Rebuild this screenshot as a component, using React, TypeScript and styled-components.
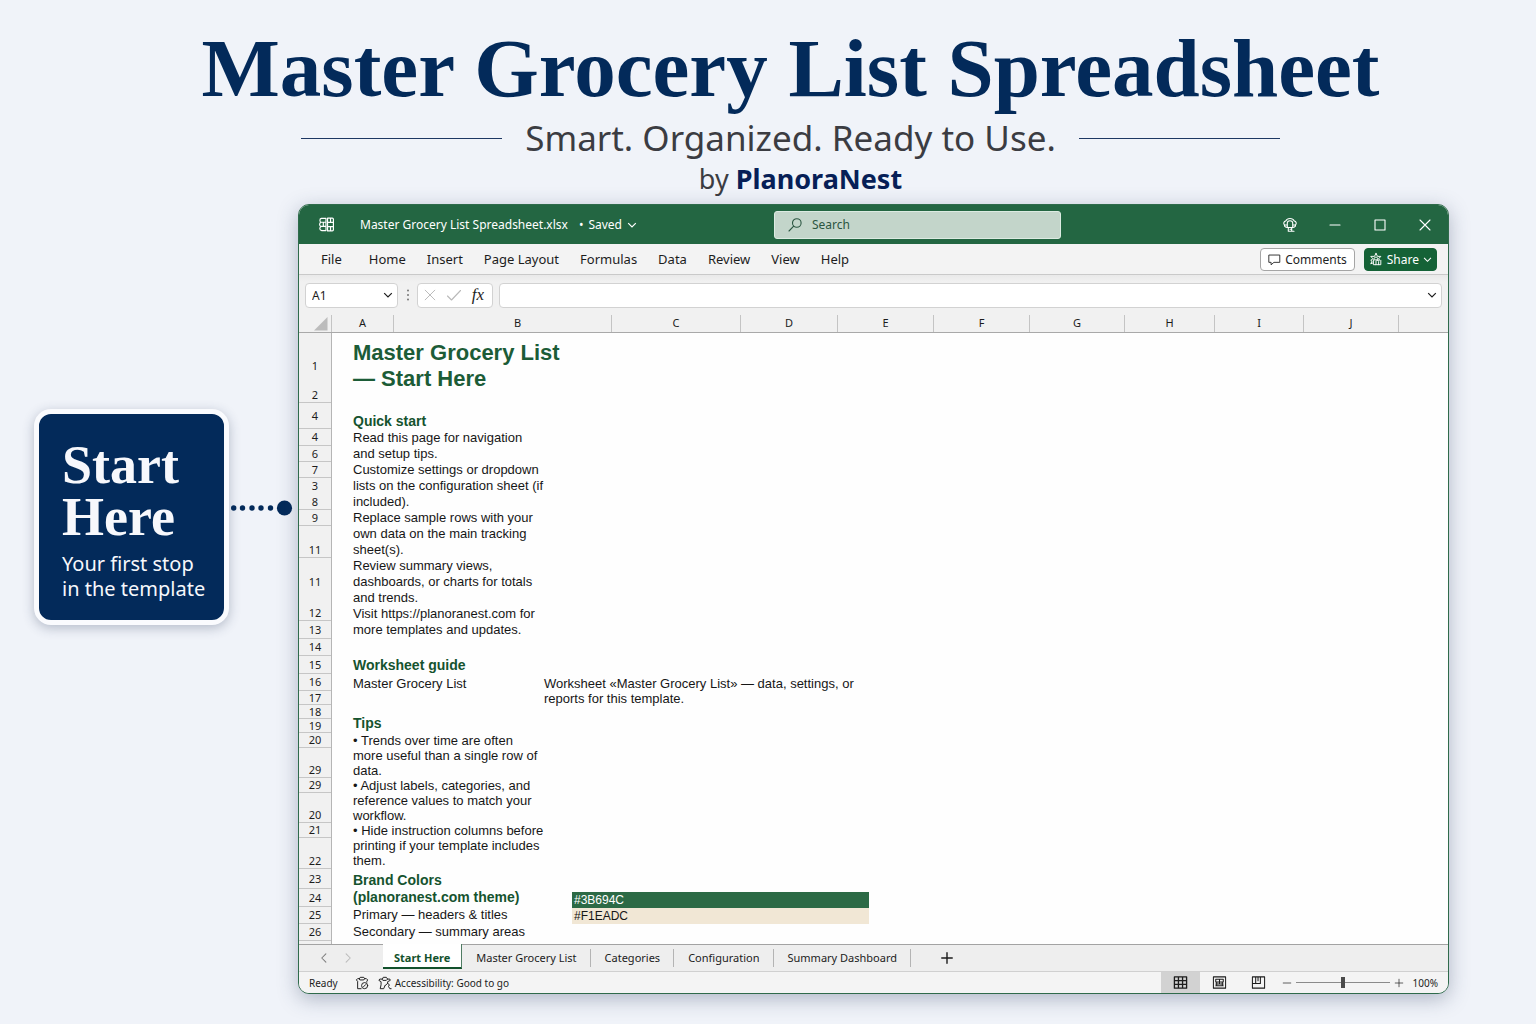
import React from "react";
import styled, { createGlobalStyle, css } from "styled-components";

const color = {
  page: "#f0f3f9",
  navy: "#032a5a",
  ink: "#3b3c42",
  green: "#236642",
  greenDark: "#12512c",
  chrome: "#f1f1f1",
  line: "#c9c9c9",
};

const sans = `"Noto Sans", "Open Sans", sans-serif`;
const serif = `"Liberation Serif", "Times New Roman", serif`;
const arial = `"Liberation Sans", Arial, sans-serif`;

const GlobalStyle = createGlobalStyle`
  *, *::before, *::after { box-sizing: border-box; }
  body { margin: 0; background: ${color.page}; font-family: ${sans}; color: #1c1c1c; }
  h1, h2, h3, p, ol, ul { margin: 0; padding: 0; }
  ol, ul { list-style: none; }
  button, input { font: inherit; color: inherit; }
  button { border: 0; background: none; padding: 0; cursor: pointer; }
`;

const Page = styled.div`
  min-height: 100vh;
  padding: 20px 87px 30px 34px;
`;

const Hero = styled.header`
  display: flex;
  flex-direction: column;
  align-items: center;
  padding-left: 98px;
  white-space: nowrap;
`;

const HeroTitle = styled.h1`
  font: bold 83px/96px ${serif};
  color: ${color.navy};
`;

const Tagline = styled.div`
  display: flex;
  align-items: center;
  gap: 23px;
`;

const Rule = styled.span`
  width: 201px;
  height: 1px;
  background: #1d3763;
`;

const TaglineText = styled.p`
  font-size: 35px;
  line-height: 44px;
  color: ${color.ink};
`;

const Byline = styled.p`
  padding-left: 20px;
  font-size: 27px;
  line-height: 38px;
  color: ${color.ink};
  strong { font-weight: 700; color: #071f57; }
`;

const Stage = styled.main`
  display: flex;
  align-items: flex-start;
  padding-top: 6px;
`;

const CalloutRow = styled.aside`
  flex: none;
  display: flex;
  align-items: center;
  gap: 2px;
  width: 264px;
  margin-top: 205px;
  > svg { margin-bottom: 18px; }
`;

const Callout = styled.section`
  width: 195px;
  padding: 25px 0 19px 23px;
  border: 5px solid #fafbfe;
  border-radius: 17px;
  background: ${color.navy};
  color: #f7f8fc;
  white-space: nowrap;
  box-shadow: 0 3px 12px rgba(40, 55, 90, 0.3);
`;

const CalloutTitle = styled.h2`
  font: bold 54px/52px ${serif};
  span { display: block; }
`;

const CalloutText = styled.p`
  padding-top: 8px;
  font-size: 20px;
  line-height: 25px;
`;

const Window = styled.article`
  flex: 1;
  min-width: 0;
  overflow: hidden;
  border: 1px solid #2f6b4b;
  border-radius: 11px;
  background: #fff;
  box-shadow: 0 5px 20px rgba(50, 65, 100, 0.34);
`;

const TitleBar = styled.header`
  display: grid;
  grid-template-columns: 475fr 287px 387fr;
  align-items: center;
  height: 39px;
  background: ${color.green};
  color: #fff;
  font-size: 12px;
`;

const FileInfo = styled.div`
  display: flex;
  align-items: center;
  padding-left: 19px;
  white-space: nowrap;
  > svg { margin-right: 25px; }
`;

const SavedButton = styled.button`
  display: flex;
  align-items: center;
  gap: 5px;
  margin-left: 11px;
`;

const SearchBox = styled.label`
  display: flex;
  align-items: center;
  gap: 9px;
  height: 28px;
  padding: 0 12px;
  border: 1px solid #dcebe2;
  border-radius: 3px;
  background: #c3d5ca;
  color: #2b5641;
`;

const PlainInput = styled.input`
  flex: 1;
  min-width: 0;
  padding: 0;
  border: 0;
  outline: 0;
  background: transparent;
  &::placeholder { color: #2b5641; opacity: 1; }
`;

const WindowControls = styled.div`
  display: flex;
  justify-content: flex-end;
  gap: 29px;
  padding-right: 15px;
  button { display: flex; }
`;

const MenuBar = styled.nav`
  display: flex;
  align-items: center;
  height: 31px;
  padding: 0 11px;
  border-bottom: 1px solid ${color.line};
  background: #f3f3f3;
  font-size: 13px;
`;

const MenuItem = styled.button<{ $wide?: boolean }>`
  padding: 0 ${(p) => (p.$wide ? 16 : 10)}px 0 11px;
  line-height: 20px;
  white-space: nowrap;
`;

const MenuActions = styled.div`
  display: flex;
  gap: 9px;
  margin-left: auto;
  font-size: 12px;
`;

const ActionButton = styled.button<{ $primary?: boolean }>`
  display: flex;
  align-items: center;
  justify-content: center;
  gap: 4px;
  height: 23px;
  padding: 0 ${(p) => (p.$primary ? 4 : 7)}px;
  border: 1px solid ${(p) => (p.$primary ? "#156237" : "#a5a5a5")};
  border-radius: 4px;
  background: ${(p) => (p.$primary ? "#156237" : "#fff")};
  color: ${(p) => (p.$primary ? "#fff" : "#222")};
  white-space: nowrap;
`;

const FormulaBar = styled.div`
  display: flex;
  align-items: center;
  height: 40px;
  padding: 0 6px;
  background: linear-gradient(#e9e9e9, ${color.chrome} 7px);
`;

const field = css`
  display: flex;
  align-items: center;
  height: 25px;
  border: 1px solid #d2d2d2;
  border-radius: 4px;
  background: #fff;
`;

const NameBox = styled.label`
  ${field}
  width: 93px;
  padding: 0 4px 0 6px;
  font-size: 12px;
`;

const Grip = styled.span`
  width: 19px;
  display: flex;
  justify-content: center;
`;

const FormulaTools = styled.div`
  ${field}
  width: 76px;
  justify-content: space-between;
  margin-right: 6px;
  padding: 0 8px 0 5px;
  button { display: flex; }
`;

const FxButton = styled.button`
  font: italic 17px/20px ${serif};
  color: #1e1e1e;
`;

const FormulaField = styled.label`
  ${field}
  flex: 1;
  padding: 0 4px 0 8px;
`;

const ColumnHeads = styled.div`
  display: grid;
  grid-template-columns: 33px 62px 218px 129px 97px 96px 96px 95px 90px 89px 95px 1fr;
  height: 18px;
  border-bottom: 1px solid #a9a9a9;
  background: ${color.chrome};
  font-size: 11px;
  line-height: 16px;
  text-align: center;
`;

const ColumnHead = styled.span<{ $shift?: boolean }>`
  padding-left: ${(p) => (p.$shift ? 30 : 0)}px;
  border-right: 1px solid #c4c4c4;
  &:last-child { border-right: 0; }
`;

const SelectAll = styled.button`
  display: flex;
  justify-content: flex-end;
  align-items: center;
  padding-right: 3px;
  border-right: 1px solid #c4c4c4;
`;

const Sheet = styled.div`
  display: flex;
  background: #fefefe;
`;

const Rail = styled.ol`
  width: 33px;
  flex: none;
  padding-bottom: 3px;
  border-right: 1px solid #b5b5b5;
  background: ${color.chrome};
  font-size: 11px;
  text-align: center;
`;

const RailCell = styled.li<{ $h: number; $end?: boolean; $open?: boolean }>`
  display: flex;
  justify-content: center;
  align-items: ${(p) => (p.$end ? "flex-end" : "center")};
  height: ${(p) => p.$h}px;
  line-height: 14px;
  border-bottom: ${(p) => (p.$open ? 0 : 1)}px solid #c6c6c6;
`;

const Guide = styled.table`
  table-layout: fixed;
  width: 100%;
  height: max-content;
  border-collapse: collapse;
  font: 13px/16px ${arial};
  color: #161616;
  white-space: pre;
`;

const Cell = styled.td<{ $top?: number; $line?: number; $indent?: boolean }>`
  padding: ${(p) => p.$top ?? 0}px 0 0 ${(p) => (p.$indent ? 21 : 0)}px;
  line-height: ${(p) => p.$line ?? 16}px;
  text-align: left;
  vertical-align: top;
`;

const SheetTitle = styled.h2`
  font: bold 22px/26px ${arial};
  color: #1c5c37;
`;

const SheetHeading = styled.h3<{ $line?: number }>`
  font: bold 14px/${(p) => p.$line ?? 18}px ${arial};
  color: #15532e;
`;

const Swatch = styled.div<{ $bg: string; $fg: string }>`
  height: 16px;
  padding-left: 2px;
  background: ${(p) => p.$bg};
  color: ${(p) => p.$fg};
  font-size: 12px;
  line-height: 17px;
`;

const TabBar = styled.nav`
  display: flex;
  align-items: stretch;
  height: 28px;
  border-top: 1px solid #a3a3a3;
  border-bottom: 1px solid #d0d0d0;
  background: #eeeeee;
  font-size: 11px;
`;

const TabArrows = styled.div`
  display: flex;
  align-items: center;
  justify-content: center;
  gap: 12px;
  width: 84px;
  padding-right: 10px;
  button { display: flex; }
`;

const Tab = styled.button<{ $active?: boolean }>`
  position: relative;
  padding: 0 14px;
  line-height: 26px;
  white-space: nowrap;
  &::after {
    content: "";
    position: absolute;
    top: 4px;
    right: 0;
    width: 1px;
    height: 18px;
    background: #b4b4b4;
  }
  ${(p) =>
    p.$active &&
    css`
      margin: -1px 0 2px;
      padding: 2px 11px 0;
      border-right: 1px solid #4f7c63;
      border-bottom: 2px solid #12512c;
      background: #fff;
      color: #12512c;
      font-weight: 700;
      line-height: 24px;
      &::after { display: none; }
    `}
`;

const AddTab = styled.button`
  display: flex;
  align-items: center;
  margin-left: 29px;
`;

const StatusBar = styled.footer`
  display: flex;
  align-items: center;
  height: 21px;
  padding: 0 10px;
  background: #f4f4f4;
  font-size: 10px;
  white-space: nowrap;
`;

const StatusItem = styled.span`
  display: flex;
  align-items: center;
  gap: 3px;
  margin-right: 9px;
  &:first-child { margin-right: 17px; }
`;

const ViewButtons = styled.div`
  display: flex;
  align-self: stretch;
  margin-left: auto;
`;

const ViewButton = styled.button<{ $active?: boolean }>`
  display: flex;
  align-items: center;
  justify-content: center;
  width: 39px;
  background: ${(p) => (p.$active ? "#d2d2d2" : "transparent")};
`;

const Zoom = styled.div`
  display: flex;
  align-items: center;
  gap: 4px;
  margin-left: 4px;
  button { display: flex; }
  output { margin-left: 5px; }
`;

const ZoomSlider = styled.input`
  appearance: none;
  width: 94px;
  height: 12px;
  margin: 0;
  background: linear-gradient(#8b8b8b, #8b8b8b) center / 100% 1px no-repeat;
  &::-webkit-slider-thumb {
    appearance: none;
    width: 4px;
    height: 11px;
    background: #4a4a4a;
  }
`;

type IconProps = { size?: number; children: React.ReactNode; stroke?: number };

const Icon = ({ size = 16, stroke = 1.1, children }: IconProps) => (
  <svg
    width={size}
    height={size}
    viewBox="0 0 16 16"
    fill="none"
    stroke="currentColor"
    strokeWidth={stroke}
    strokeLinecap="round"
    strokeLinejoin="round"
    aria-hidden="true"
  >
    {children}
  </svg>
);

const Chevron = ({ size = 10 }: { size?: number }) => (
  <svg width={size} height={size} viewBox="0 0 10 10" fill="none" stroke="currentColor" strokeWidth="1.2" aria-hidden="true">
    <path d="M1.2 3.2 5 7l3.800-3.800" />
  </svg>
);

const Connector = () => (
  <svg width="64" height="16" viewBox="0 0 64 16" fill={color.navy} aria-hidden="true">
    {[2.7, 11.5, 21, 30, 39.5].map((x) => (
      <circle key={x} cx={x} cy="8" r="2.700" />
    ))}
    <circle cx="53.500" cy="8" r="7.600" />
  </svg>
);

const menus = ["File", "Home", "Insert", "Page Layout", "Formulas", "Data", "Review", "View", "Help"];
const tabs = ["Start Here", "Master Grocery List", "Categories", "Configuration", "Summary Dashboard"];
const columns = ["A", "B", "C", "D", "E", "F", "G", "H", "I", "J", ""];

type RailRow = { n: string; h: number; end?: boolean; open?: boolean };
const rail: RailRow[] = [
  { n: "1", h: 40, end: true, open: true },
  { n: "2", h: 30, end: true },
  { n: "4", h: 26 },
  { n: "4", h: 17 },
  { n: "6", h: 16 },
  { n: "7", h: 16 },
  { n: "3", h: 16, open: true },
  { n: "8", h: 16 },
  { n: "9", h: 16 },
  { n: "11", h: 32, end: true },
  { n: "11", h: 47, open: true },
  { n: "12", h: 16 },
  { n: "13", h: 18 },
  { n: "14", h: 17 },
  { n: "15", h: 18 },
  { n: "16", h: 17 },
  { n: "17", h: 14 },
  { n: "18", h: 14 },
  { n: "19", h: 14 },
  { n: "20", h: 15 },
  { n: "29", h: 30, end: true },
  { n: "29", h: 15 },
  { n: "20", h: 30, end: true },
  { n: "21", h: 15 },
  { n: "22", h: 31, end: true },
  { n: "23", h: 20 },
  { n: "24", h: 18 },
  { n: "25", h: 17 },
  { n: "26", h: 17 },
];

const steps = [
  "Read this page for navigation\nand setup tips.",
  "Customize settings or dropdown\nlists on the configuration sheet (if\nincluded).",
  "Replace sample rows with your\nown data on the main tracking\nsheet(s).",
  "Review summary views,\ndashboards, or charts for totals\nand trends.",
  "Visit https://planoranest.com for\nmore templates and updates.",
];

const tips = [
  "• Trends over time are often\nmore useful than a single row of\ndata.",
  "• Adjust labels, categories, and\nreference values to match your\nworkflow.",
  "• Hide instruction columns before\nprinting if your template includes\nthem.",
];

const GuideTable = () => (
  <Guide>
    <colgroup>
      <col style={{ width: 212 }} />
      <col style={{ width: 28 }} />
      <col style={{ width: 297 }} />
      <col />
    </colgroup>
    <tbody>
      <tr>
        <Cell $indent $top={7} colSpan={4}>
          <SheetTitle>{"Master Grocery List\n— Start Here"}</SheetTitle>
        </Cell>
      </tr>
      <tr>
        <Cell $indent $top={20} colSpan={4}>
          <SheetHeading>Quick start</SheetHeading>
        </Cell>
      </tr>
      {steps.map((text) => (
        <tr key={text}>
          <Cell $indent colSpan={4}>{text}</Cell>
        </tr>
      ))}
      <tr>
        <Cell $indent $top={18} colSpan={4}>
          <SheetHeading>Worksheet guide</SheetHeading>
        </Cell>
      </tr>
      <tr>
        <Cell $indent $top={2} $line={15}>Master Grocery List</Cell>
        <Cell $top={2} $line={15} colSpan={3}>
          {"Worksheet «Master Grocery List» — data, settings, or\nreports for this template."}
        </Cell>
      </tr>
      <tr>
        <Cell $indent $top={8} colSpan={4}>
          <SheetHeading $line={19}>Tips</SheetHeading>
        </Cell>
      </tr>
      {tips.map((text) => (
        <tr key={text}>
          <Cell $indent $line={15} colSpan={4}>{text}</Cell>
        </tr>
      ))}
      <tr>
        <Cell $indent $top={4} $line={17} colSpan={2}>
          <SheetHeading $line={17}>{"Brand Colors\n(planoranest.com theme)"}</SheetHeading>
          {"Primary — headers & titles\nSecondary — summary areas"}
        </Cell>
        <Cell $top={24}>
          <Swatch $bg="#2c6a45" $fg="#fff">#3B694C</Swatch>
          <Swatch $bg="#f1e7d5" $fg="#161616">#F1EADC</Swatch>
        </Cell>
        <Cell />
      </tr>
    </tbody>
  </Guide>
);

export default function App() {
  return (
    <>
      <GlobalStyle />
      <Page>
        <Hero>
          <HeroTitle>Master Grocery List Spreadsheet</HeroTitle>
          <Tagline>
            <Rule />
            <TaglineText>Smart. Organized. Ready to Use.</TaglineText>
            <Rule />
          </Tagline>
          <Byline>
            by <strong>PlanoraNest</strong>
          </Byline>
        </Hero>
        <Stage>
          <CalloutRow>
            <Callout>
              <CalloutTitle>
                <span>Start</span>
                <span>Here</span>
              </CalloutTitle>
              <CalloutText>
                Your first stop
                <br />
                in the template
              </CalloutText>
            </Callout>
            <Connector />
          </CalloutRow>
          <Window>
            <TitleBar>
              <FileInfo>
                <Icon size={17}>
                  <path d="M7.500 2.300H3.200Q1.700 2.600 1.800 4.200T3 5.900Q1.400 6.500 1.500 8t1.400 1.800Q1.600 10.600 1.700 12t1.800 1.700h4zM9 2h4.500q1 0 1 1v10q0 1-1 1H9zM3 5.900h4.500M9 6h5.500M3 9.800h4.500M9 10h5.500M5 6v3.800M11.800 2v4M11.800 10v4" />
                </Icon>
                <span>Master Grocery List Spreadsheet.xlsx</span>
                <SavedButton>
                  <span>•</span> Saved <Chevron />
                </SavedButton>
              </FileInfo>
              <SearchBox>
                <Icon>
                  <circle cx="9.800" cy="6" r="4.300" />
                  <path d="M6.700 9.200 2 14" />
                </Icon>
                <PlainInput type="search" placeholder="Search" aria-label="Search" />
              </SearchBox>
              <WindowControls>
                <button aria-label="Tips">
                  <Icon>
                    <path d="M5.300 10.500C3.400 10.300 2.200 9.300 2.500 8 1 6.500 2 4.300 3.700 4 4.700 2 6.400 1.500 8 1.500s3.300.500 4.300 2.500c1.700.300 2.700 2.500 1.200 4 .300 1.300-.9 2.300-2.800 2.500M5.300 10.500V5.800Q5.500 3.800 8 3.800t2.700 2v4.700M2.500 8h2.800M10.700 8h2.800M5.300 10.500h5.400M6.300 10.500v3.700h3.400v-3.700M8 12.300h1.700M10 14.200h2" />
                  </Icon>
                </button>
                <button aria-label="Minimize">
                  <Icon>
                    <path d="M3 8h10" />
                  </Icon>
                </button>
                <button aria-label="Maximize">
                  <Icon>
                    <path d="M3 3h10v10H3z" />
                  </Icon>
                </button>
                <button aria-label="Close">
                  <Icon>
                    <path d="m3 3 10 10M13 3 3 13" />
                  </Icon>
                </button>
              </WindowControls>
            </TitleBar>

            <MenuBar>
              {menus.map((m) => (
                <MenuItem key={m} $wide={m === "File"}>{m}</MenuItem>
              ))}
              <MenuActions>
                <ActionButton>
                  <Icon size={13}>
                    <path d="M1.500 2.500h13v9H7.300L3.800 14.500v-3H1.500z" stroke="#222" />
                  </Icon>
                  Comments
                </ActionButton>
                <ActionButton $primary>
                  <Icon size={14}>
                    <path d="M8 1.500 9.700 5h3.800l-2.300 2.500.8 2H8.800M8 1.500 6.300 5H2l2.500 2.700L2 9.500l1.500 1-1.500 3 2.500-1M6 7l2-1.500L10 7v2H6zM5 9.500v5h3v-4M8 14.500h5.500v-5M11 11v3.500" />
                  </Icon>
                  Share <Chevron size={9} />
                </ActionButton>
              </MenuActions>
            </MenuBar>

            <FormulaBar>
              <NameBox>
                <PlainInput defaultValue="A1" aria-label="Name box" />
                <Chevron />
              </NameBox>
              <Grip>
                <svg width="4" height="12" viewBox="0 0 4 12" fill="#777" aria-hidden="true">
                  <circle cx="2" cy="1.500" r="1" />
                  <circle cx="2" cy="6" r="1" />
                  <circle cx="2" cy="10.500" r="1" />
                </svg>
              </Grip>
              <FormulaTools>
                <button aria-label="Cancel">
                  <Icon size={14}>
                    <path d="M2.500 2.500l11 11M13.500 2.500l-11 11" stroke="#b9b9b9" />
                  </Icon>
                </button>
                <button aria-label="Enter">
                  <Icon>
                    <path d="M1.500 9 5.500 13 14.500 3.500" stroke="#b9b9b9" />
                  </Icon>
                </button>
                <FxButton aria-label="Insert function">fx</FxButton>
              </FormulaTools>
              <FormulaField>
                <PlainInput aria-label="Formula" />
                <Chevron />
              </FormulaField>
            </FormulaBar>

            <ColumnHeads>
              <SelectAll aria-label="Select all">
                <svg width="15" height="14" viewBox="0 0 15 14" fill="#bcbcbc" aria-hidden="true">
                  <path d="M14.500 0v13.500H1z" />
                </svg>
              </SelectAll>
              {columns.map((c) => (
                <ColumnHead key={c} $shift={c === "B"}>{c}</ColumnHead>
              ))}
            </ColumnHeads>

            <Sheet>
              <Rail>
                {rail.map((r, i) => (
                  <RailCell key={i} $h={r.h} $end={r.end} $open={r.open}>{r.n}</RailCell>
                ))}
              </Rail>
              <GuideTable />
            </Sheet>

            <TabBar>
              <TabArrows>
                <button aria-label="Previous sheet">
                  <Icon size={12} stroke={1.4}>
                    <path d="M10.500 2.500 5 8l5.500 5.500" stroke="#7d7d7d" />
                  </Icon>
                </button>
                <button aria-label="Next sheet">
                  <Icon size={12} stroke={1.4}>
                    <path d="M5.500 2.500 11 8l-5.500 5.500" stroke="#bbbbbb" />
                  </Icon>
                </button>
              </TabArrows>
              {tabs.map((t, i) => (
                <Tab key={t} $active={i === 0}>{t}</Tab>
              ))}
              <AddTab aria-label="Add sheet">
                <Icon size={14} stroke={1.6}>
                  <path d="M8 2v12M2 8h12" />
                </Icon>
              </AddTab>
            </TabBar>

            <StatusBar>
              <StatusItem>Ready</StatusItem>
              <StatusItem>
                <Icon size={14}>
                  <path d="M5 3H3L1.500 4.500 3 6v8.500h4M11 3h2l1.500 1.500-1 1.500v1M5 3l1-1.500h4L11 3l-1 1.500H6z" />
                  <circle cx="11" cy="11" r="3.500" />
                  <path d="m9.800 12.200 2.400-2.400" />
                </Icon>
              </StatusItem>
              <StatusItem>
                <Icon size={14}>
                  <path d="M5 3.500H2L1 5l2.500 1.500V10L2.500 14.500h4L8 11M11 3.500h2.500L14 5l-3 1.500v2M5 3.500l1-2h3.500L11 3.500 9.500 5H6zM8 11l3-2.500 2 1.500-1 2 1.500 2.500H15" />
                </Icon>
                Accessibility: Good to go
              </StatusItem>
              <ViewButtons>
                <ViewButton $active aria-label="Normal view">
                  <Icon size={15} stroke={1.4}>
                    <path d="M1.500 2h13v12h-13zM1.500 6h13M1.500 10h13M5.800 2v12M10.200 2v12" />
                  </Icon>
                </ViewButton>
                <ViewButton aria-label="Page layout view">
                  <Icon size={15}>
                    <path d="M1.500 2h13v12h-13zM4 4.500h8v3H4zM5 7.500v4h6v-4M4 9.500h8M4 11.500h8M8 4.500v5" />
                  </Icon>
                </ViewButton>
                <ViewButton aria-label="Page break view">
                  <Icon size={15}>
                    <path d="M1.500 2h13v12h-13zM5 2v7H1.500M5 9h5V2M7.500 2v4" />
                  </Icon>
                </ViewButton>
              </ViewButtons>
              <Zoom>
                <button aria-label="Zoom out">
                  <Icon size={10}>
                    <path d="M2 8h12" />
                  </Icon>
                </button>
                <ZoomSlider type="range" min={0} max={200} defaultValue={100} aria-label="Zoom" />
                <button aria-label="Zoom in">
                  <Icon size={10}>
                    <path d="M2 8h12M8 2v12" />
                  </Icon>
                </button>
                <output>100%</output>
              </Zoom>
            </StatusBar>
          </Window>
        </Stage>
      </Page>
    </>
  );
}
